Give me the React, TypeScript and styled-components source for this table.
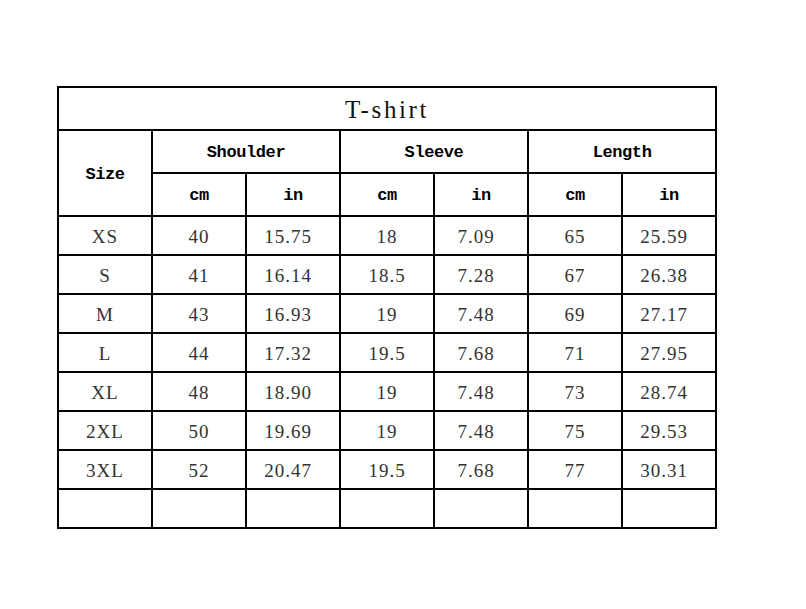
import React from "react";
import styled, { createGlobalStyle } from "styled-components";

const GlobalStyle = createGlobalStyle`
  html, body {
    margin: 0;
    padding: 0;
    background: #fff;
  }
`;

const Page = styled.div`
  width: 806px;
  height: 609px;
  padding: 86px 0 0 57px;
  box-sizing: border-box;
  background: #fff;
`;

const Table = styled.table`
  border-collapse: separate;
  border-spacing: 0;
  table-layout: fixed;
  width: 660px;
  border: 2px solid #000;
`;

const Cell = styled.td<{ $last?: boolean; $bottom?: boolean; $shift?: boolean }>`
  box-sizing: border-box;
  padding: 2px ${(p) => (p.$shift ? "10px" : "0")} 0 0;
  line-height: 1;
  text-align: center;
  vertical-align: middle;
  border-right: ${(p) => (p.$last ? "none" : "2px solid #000")};
  border-bottom: ${(p) => (p.$bottom ? "none" : "2px solid #000")};
  white-space: nowrap;
`;

const TitleCell = styled(Cell)`
  height: 43px;
  font-family: "Liberation Serif", serif;
  font-size: 25px;
  letter-spacing: 2.6px;
  color: #111;
`;

const HeadCell = styled(Cell)`
  height: 43px;
  font-family: "Liberation Mono", monospace;
  font-size: 17px;
  font-weight: bold;
  letter-spacing: -0.4px;
  color: #000;
`;

const DataCell = styled(Cell)`
  height: ${(p) => (p.$bottom ? "37px" : "39px")};
  font-family: "Liberation Serif", serif;
  font-size: 19px;
  letter-spacing: 1px;
  color: #333;
`;

const widths = [94, 94, 94, 94, 94, 94, 92];

const rows: string[][] = [
  ["XS", "40", "15.75", "18", "7.09", "65", "25.59"],
  ["S", "41", "16.14", "18.5", "7.28", "67", "26.38"],
  ["M", "43", "16.93", "19", "7.48", "69", "27.17"],
  ["L", "44", "17.32", "19.5", "7.68", "71", "27.95"],
  ["XL", "48", "18.90", "19", "7.48", "73", "28.74"],
  ["2XL", "50", "19.69", "19", "7.48", "75", "29.53"],
  ["3XL", "52", "20.47", "19.5", "7.68", "77", "30.31"],
  ["", "", "", "", "", "", ""],
];

const groups = ["Shoulder", "Sleeve", "Length"];

export default function App() {
  return (
    <>
      <GlobalStyle />
      <Page>
        <Table>
          <colgroup>
            {widths.map((w, i) => (
              <col key={i} style={{ width: w }} />
            ))}
          </colgroup>
          <tbody>
            <tr>
              <TitleCell colSpan={7} $last>
                T-shirt
              </TitleCell>
            </tr>
            <tr>
              <HeadCell rowSpan={2}>Size</HeadCell>
              {groups.map((g, i) => (
                <HeadCell key={g} colSpan={2} $last={i === groups.length - 1}>
                  {g}
                </HeadCell>
              ))}
            </tr>
            <tr>
              {groups.map((g, i) => (
                <React.Fragment key={g}>
                  <HeadCell>cm</HeadCell>
                  <HeadCell $last={i === groups.length - 1}>in</HeadCell>
                </React.Fragment>
              ))}
            </tr>
            {rows.map((r, ri) => (
              <tr key={ri}>
                {r.map((v, ci) => (
                  <DataCell
                    key={ci}
                    $last={ci === r.length - 1}
                    $bottom={ri === rows.length - 1}
                    $shift={ci > 0 && ci % 2 === 0}
                  >
                    {v}
                  </DataCell>
                ))}
              </tr>
            ))}
          </tbody>
        </Table>
      </Page>
    </>
  );
}
